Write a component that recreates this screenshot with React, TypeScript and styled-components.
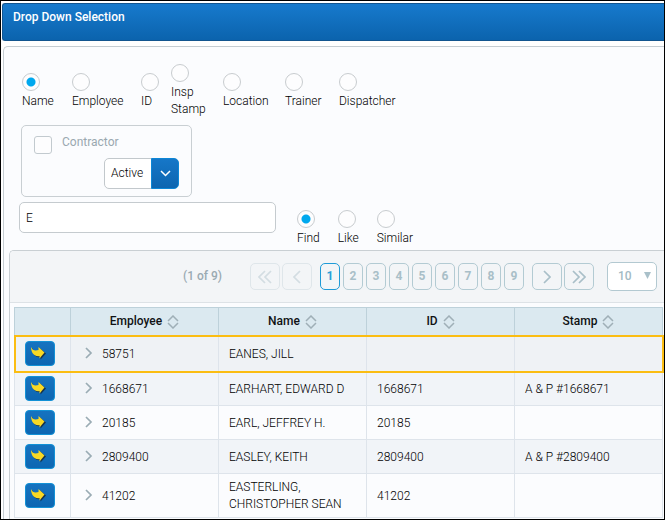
import React, { useState } from "react";
import styled, { createGlobalStyle, css } from "styled-components";

const GlobalStyle = createGlobalStyle`
  *, *::before, *::after { box-sizing: border-box; }
  body { margin: 0; background: #fff; }
  body, button, input, select {
    font-family: Roboto, "Open Sans", sans-serif;
    font-size: 12px;
    font-weight: 300;
    line-height: 17px;
    color: #000;
  }
`;

const Frame = styled.div`
  display: flex;
  flex-direction: column;
  min-height: 100vh;
  padding: 2px 0 0 1px;
  border: 1px solid #000;
  overflow: hidden;
`;

const TitleBar = styled.header`
  height: 38px;
  padding: 5px 10px;
  border: 1px solid #12558f;
  border-right: 0;
  border-radius: 3px 0 0 3px;
  background: linear-gradient(#177acd, #0b63ad);
`;

const Title = styled.h1`
  margin: 0;
  font-size: 12px;
  line-height: 17px;
  font-weight: 500;
  color: #fff;
`;

const Panel = styled.main`
  flex: 1;
  display: flex;
  flex-direction: column;
  margin: 5px 0 0 1px;
  padding: 17px 0 0 5px;
  border: 1px solid #c5cdd2;
  border-width: 1px 0 0 1px;
  border-radius: 5px 0 0 0;
  background: #fbfcfe;
`;

const RadioRow = styled.div`
  display: grid;
  grid-template-columns: 50px 69px 30px 52px 62px 54px auto;
  align-items: center;
  justify-content: start;
  padding-left: 13px;
`;

const MatchRow = styled.div`
  display: flex;
  gap: 18px;
`;

const RadioItem = styled.label`
  display: flex;
  flex-direction: column;
  align-items: flex-start;
  gap: 2px;
`;

const RadioInput = styled.input`
  appearance: none;
  width: 18px;
  height: 18px;
  margin: 0;
  border: 1px solid #c8cccf;
  border-radius: 50%;
  background: #fdfdfe;
  &:checked {
    background: radial-gradient(circle, #00a8ee 4px, #fdfdfe 5px);
  }
`;

const Filter = styled.div`
  display: flex;
  flex-direction: column;
  width: 171px;
  margin: 7px 0 0 12px;
  padding: 8px 12px 7px;
  border: 1px solid #c9cfd3;
  border-radius: 5px;
`;

const CheckLabel = styled.label`
  display: flex;
  align-items: flex-start;
  gap: 10px;
  height: 24px;
  font-weight: 400;
  color: #9aa8b0;
`;

const CheckInput = styled.input`
  appearance: none;
  width: 18px;
  height: 18px;
  margin: 2px 0 0;
  border: 1px solid #c2cacf;
  border-radius: 3px;
  background: #fdfdfe;
  &:checked { background: #00a8ee; }
`;

const StatusBox = styled.div`
  position: relative;
  align-self: flex-end;
  width: 75px;
`;

const StatusSelect = styled.select`
  appearance: none;
  display: block;
  width: 100%;
  height: 31px;
  padding: 0 28px 0 6px;
  border: 1px solid #c2c8cc;
  border-radius: 5px;
  background: #fff;
`;

const StatusArrow = styled.span`
  position: absolute;
  top: 0;
  right: 0;
  bottom: 0;
  display: flex;
  align-items: center;
  justify-content: center;
  width: 28px;
  border: 1px solid #0c86d6;
  border-radius: 0 5px 5px 0;
  background: linear-gradient(#1677c8, #0d65b0);
  pointer-events: none;
`;

const SearchRow = styled.div`
  display: flex;
  align-items: flex-start;
  gap: 21px;
  margin-top: 5px;
  padding-left: 10px;
`;

const SearchInput = styled.input`
  width: 257px;
  height: 31px;
  padding: 0 6px;
  border: 1px solid #c5cbcf;
  border-radius: 5px;
  background: #fff;
`;

const MatchBox = styled.div`
  padding-top: 8px;
`;

const Results = styled.section`
  flex: 1;
  margin-top: 3px;
  border: 1px solid #c9cfd3;
  border-width: 1px 0 0 1px;
  border-radius: 5px 0 0 0;
`;

const Paginator = styled.nav`
  display: flex;
  align-items: center;
  height: 52px;
  padding-left: 173px;
  border-bottom: 1px solid #dde2e6;
  border-radius: 4px 0 0 0;
  background: #f3f5f7;
`;

const PageCount = styled.span`
  width: 67px;
  white-space: nowrap;
  font-weight: 500;
  color: #9aaab2;
`;

const PageGroup = styled.div<{ $gap: number }>`
  display: flex;
  gap: ${(p) => p.$gap}px;
  margin-right: 8px;
`;

const PageButton = styled.button<{ $wide?: boolean; $active?: boolean }>`
  display: flex;
  align-items: center;
  justify-content: center;
  width: ${(p) => (p.$wide ? 30 : 20)}px;
  height: 27px;
  padding: 0;
  border: 1px solid ${(p) => (p.$active ? "#1f9bd7" : "#b3cbd3")};
  border-radius: 5px;
  background: transparent;
  font-weight: 700;
  color: ${(p) => (p.$active ? "#2b9fd6" : "#a9bfc8")};
  &:disabled {
    border-color: #dfe6ea;
    color: #d3dde2;
  }
`;

const SizeBox = styled.div`
  position: relative;
  width: 50px;
  margin-left: 5px;
`;

const SizeSelect = styled.select`
  appearance: none;
  display: block;
  width: 100%;
  height: 29px;
  padding: 0 10px;
  border: 1px solid #b3c9d1;
  border-radius: 5px;
  background: #fff;
  font-weight: 500;
  color: #a3bac4;
`;

const SizeArrow = styled.svg`
  position: absolute;
  top: 10px;
  right: 6px;
  pointer-events: none;
`;

const Table = styled.table`
  width: calc(100% - 5px);
  margin: 4px 0 0 4px;
  border-collapse: collapse;
  table-layout: fixed;
`;

const HeadCell = styled.th<{ $narrow?: boolean }>`
  width: ${(p) => (p.$narrow ? "56px" : "auto")};
  height: 28px;
  padding: 0;
  border: 1px solid #bdd1da;
  background: #dbe9f0;
  font-weight: 500;
  color: #101214;
`;

const SortButton = styled.button`
  display: inline-flex;
  align-items: center;
  gap: 5px;
  padding: 0;
  border: 0;
  background: none;
  font-weight: 500;
  color: #101214;
`;

const Row = styled.tr<{ $selected?: boolean }>`
  background: #fbfcfe;
  &:nth-child(even) { background: #f1f4f8; }
  ${(p) =>
    p.$selected &&
    css`
      && { background: #eff2f5; }
      outline: 2px solid #fbbd12;
      outline-offset: -1px;
    `}
`;

const Cell = styled.td<{ $action?: boolean }>`
  height: 34px;
  padding: ${(p) => (p.$action ? "0 10px" : "5px 10px 4px")};
  border: 1px solid #dee4eb;
  tr:first-child > & { height: 36px; }
`;

const GoButton = styled.button`
  display: flex;
  align-items: center;
  width: 30px;
  height: 25px;
  padding: 0 0 2px 4px;
  border: 1px solid #1291d6;
  border-radius: 4px;
  background: linear-gradient(#1673c0, #0d66b2);
`;

const Expandable = styled.div`
  display: flex;
  align-items: center;
  gap: 9px;
  padding-left: 4px;
`;

const ExpandButton = styled.button`
  display: flex;
  padding: 0 0 2px;
  border: 0;
  background: none;
  color: #9aacb4;
`;

const Chevron = ({ d, w = 8, h = 12 }: { d: string; w?: number; h?: number }) => (
  <svg width={w} height={h} viewBox={`0 0 ${w} ${h}`} fill="none" stroke="currentColor" strokeWidth="1.7" aria-hidden="true">
    <path d={d} />
  </svg>
);

const SortIcon = () => (
  <svg width="12" height="14" viewBox="0 0 12 14" fill="none" stroke="#9fafb7" strokeWidth="1.5" aria-hidden="true">
    <path d="M1 6 6 1l5 5M1 8l5 5 5-5" />
  </svg>
);

const ArrowIcon = () => (
  <svg width="17" height="14" viewBox="0 0 17 14" aria-hidden="true">
    <path d="M2 2C3.5 5.5 6 6.5 9.5 5V2L16 7.5 10.5 13.5V11C6 12 2 8.5 2 2Z" fill="#17334d" />
    <path d="M1 1C2.5 4.5 5 5 8.5 4V1L14.5 6.5 9.500 12.5V10C5 11 1 7.5 1 1Z" fill="#f8d926" />
  </svg>
);

const searchFields = ["Name", "Employee", "ID", "Insp Stamp", "Location", "Trainer", "Dispatcher"];
const matchModes = ["Find", "Like", "Similar"];
const pages = [1, 2, 3, 4, 5, 6, 7, 8, 9];
const columns = ["Employee", "Name", "ID", "Stamp"];

const people = [
  { employee: "58751", name: "EANES, JILL", id: "", stamp: "" },
  { employee: "1668671", name: "EARHART, EDWARD D", id: "1668671", stamp: "A & P #1668671" },
  { employee: "20185", name: "EARL, JEFFREY H.", id: "20185", stamp: "" },
  { employee: "2809400", name: "EASLEY, KEITH", id: "2809400", stamp: "A & P #2809400" },
  { employee: "41202", name: "EASTERLING, CHRISTOPHER SEAN", id: "41202", stamp: "" },
];

const Radios = ({ name, options }: { name: string; options: string[] }) => (
  <>
    {options.map((o, i) => (
      <RadioItem key={o}>
        <RadioInput type="radio" name={name} defaultChecked={i === 0} />
        {o}
      </RadioItem>
    ))}
  </>
);

export default function App() {
  const [query, setQuery] = useState("E");
  const [page, setPage] = useState(1);
  const go = (n: number) => setPage(Math.min(9, Math.max(1, n)));

  return (
    <Frame>
      <GlobalStyle />
      <TitleBar>
        <Title>Drop Down Selection</Title>
      </TitleBar>
      <Panel>
        <RadioRow role="radiogroup" aria-label="Search by">
          <Radios name="field" options={searchFields} />
        </RadioRow>
        <Filter>
          <CheckLabel>
            <CheckInput type="checkbox" />
            Contractor
          </CheckLabel>
          <StatusBox>
            <StatusSelect aria-label="Status">
              <option>Active</option>
              <option>Inactive</option>
            </StatusSelect>
            <StatusArrow>
              <svg width="11" height="7" viewBox="0 0 11 7" fill="none" stroke="#fff" strokeWidth="1.5" aria-hidden="true">
                <path d="M1 1l4.5 4.5L10 1" />
              </svg>
            </StatusArrow>
          </StatusBox>
        </Filter>
        <SearchRow>
          <SearchInput aria-label="Search" value={query} onChange={(e) => setQuery(e.target.value)} />
          <MatchBox>
            <MatchRow role="radiogroup" aria-label="Match">
              <Radios name="match" options={matchModes} />
            </MatchRow>
          </MatchBox>
        </SearchRow>
        <Results>
          <Paginator aria-label="Pages">
            <PageCount>({page} of 9)</PageCount>
            <PageGroup $gap={2}>
              <PageButton $wide disabled={page === 1} aria-label="First" onClick={() => go(1)}>
                <Chevron w={14} h={14} d="M7 1 1 7l6 6M13 1 7 7l6 6" />
              </PageButton>
              <PageButton $wide disabled={page === 1} aria-label="Previous" onClick={() => go(page - 1)}>
                <Chevron h={14} d="M7 1 1 7l6 6" />
              </PageButton>
            </PageGroup>
            <PageGroup $gap={3}>
              {pages.map((p) => (
                <PageButton key={p} $active={p === page} onClick={() => go(p)}>
                  {p}
                </PageButton>
              ))}
            </PageGroup>
            <PageGroup $gap={2}>
              <PageButton $wide disabled={page === 9} aria-label="Next" onClick={() => go(page + 1)}>
                <Chevron h={14} d="M1 1l6 6-6 6" />
              </PageButton>
              <PageButton $wide disabled={page === 9} aria-label="Last" onClick={() => go(9)}>
                <Chevron w={14} h={14} d="M1 1l6 6-6 6M7 1l6 6-6 6" />
              </PageButton>
            </PageGroup>
            <SizeBox>
              <SizeSelect aria-label="Rows per page">
                <option>10</option>
                <option>25</option>
              </SizeSelect>
              <SizeArrow width="7" height="7" viewBox="0 0 7 7" aria-hidden="true">
                <path d="M0 0h7L3.5 7Z" fill="#a9c0c9" />
              </SizeArrow>
            </SizeBox>
          </Paginator>
          <Table>
            <thead>
              <tr>
                <HeadCell $narrow aria-label="Select" />
                {columns.map((c) => (
                  <HeadCell key={c} scope="col">
                    <SortButton>
                      {c}
                      <SortIcon />
                    </SortButton>
                  </HeadCell>
                ))}
              </tr>
            </thead>
            <tbody>
              {people.map((p, i) => (
                <Row key={p.employee} $selected={i === 0}>
                  <Cell $action>
                    <GoButton aria-label={`Select ${p.name}`}>
                      <ArrowIcon />
                    </GoButton>
                  </Cell>
                  <Cell>
                    <Expandable>
                      <ExpandButton aria-label={`Expand ${p.name}`}>
                        <Chevron d="M1 1l5 5-5 5" />
                      </ExpandButton>
                      {p.employee}
                    </Expandable>
                  </Cell>
                  <Cell>{p.name}</Cell>
                  <Cell>{p.id}</Cell>
                  <Cell>{p.stamp}</Cell>
                </Row>
              ))}
            </tbody>
          </Table>
        </Results>
      </Panel>
    </Frame>
  );
}
